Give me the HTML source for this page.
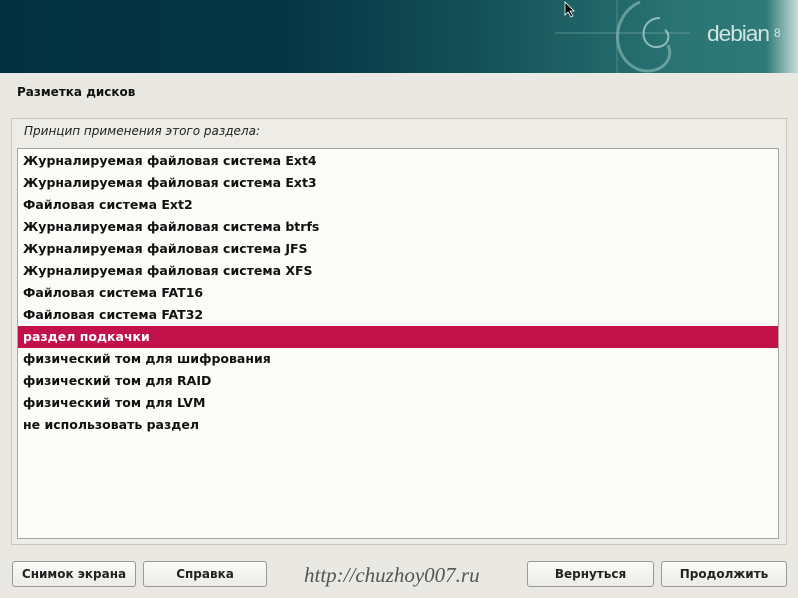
<!DOCTYPE html>
<html><head><meta charset="utf-8"><style>
body{margin:0;width:798px;height:598px;overflow:hidden;background:#e9e8e2;font-family:"DejaVu Sans","Liberation Sans",sans-serif;position:relative}
#hdr{position:absolute;left:0;top:0;width:798px;height:73px;background:linear-gradient(90deg,#033142 0%,#043443 35%,#145058 60%,#2a7473 85%,#2f7a78 96%,#c8dcd8 100%)}
.t{position:absolute;font-size:12px;font-weight:bold;color:#111}
#frame{position:absolute;left:11px;top:118px;width:774px;height:425px;border:1px solid #c8c6bf;background:#edece7}
#list{position:absolute;left:17px;top:148px;width:760px;height:388px;border:1px solid #a8a69f;background:#fbfbf8;padding-top:1px;box-sizing:content-box}
.r{height:22px;line-height:22px;padding-left:5px;font-size:12.5px;font-weight:bold;color:#111}
.sel{background:#c3114c;color:#fff}
.b{position:absolute;top:561px;height:24px;border:1px solid #9a9892;border-radius:3px;background:linear-gradient(#fafaf8,#ecebe7);font-size:12px;font-weight:bold;line-height:24px;text-align:center;color:#222}
</style></head><body>
<div id="hdr">
<svg width="798" height="73" style="position:absolute;left:0;top:0">
<line x1="555" y1="33" x2="690" y2="33" stroke="#7fb0ad" stroke-width="1" opacity=".6"/>
<line x1="617" y1="0" x2="617" y2="73" stroke="#7fb0ad" stroke-width="1" opacity=".5"/>
<path d="M640 2 C610 15 610 60 640 70 C660 75 675 60 668 45" stroke="#8fc0bc" stroke-width="3" fill="none" opacity=".6"/>
<path d="M660 18 C640 18 638 45 655 47 C668 48 672 35 665 30" stroke="#a8d0cc" stroke-width="2" fill="none" opacity=".8"/>
<text x="707" y="41" font-family="Liberation Sans Narrow,Liberation Sans,sans-serif" font-size="22" letter-spacing="-1" textLength="62" lengthAdjust="spacingAndGlyphs" fill="#cfe4e0">debian</text>
<text x="774" y="37" font-family="Liberation Sans,sans-serif" font-size="12" fill="#cfe4e0">8</text>
<path d="M565 2 L565 15 L568 12 L571 17 L573 16 L570 11 L574 11 Z" fill="#000" stroke="#fff" stroke-width=".8"/>
</svg>
</div>
<div class="t" style="left:17px;top:85px">Разметка дисков</div>
<div id="frame"></div>
<div style="position:absolute;left:24px;top:124px;font-size:12px;font-style:italic;color:#222">Принцип применения этого раздела:</div>
<div id="list">
<div class="r">Журналируемая файловая система Ext4</div>
<div class="r">Журналируемая файловая система Ext3</div>
<div class="r">Файловая система Ext2</div>
<div class="r">Журналируемая файловая система btrfs</div>
<div class="r">Журналируемая файловая система JFS</div>
<div class="r">Журналируемая файловая система XFS</div>
<div class="r">Файловая система FAT16</div>
<div class="r">Файловая система FAT32</div>
<div class="r sel">раздел подкачки</div>
<div class="r">физический том для шифрования</div>
<div class="r">физический том для RAID</div>
<div class="r">физический том для LVM</div>
<div class="r">не использовать раздел</div>
</div>
<div class="b" style="left:12px;width:122px">Снимок экрана</div>
<div class="b" style="left:143px;width:122px">Справка</div>
<div style="position:absolute;left:304px;top:563px;font-family:'Liberation Serif',serif;font-style:italic;font-size:21px;color:#555">http://chuzhoy007.ru</div>
<div class="b" style="left:527px;width:125px">Вернуться</div>
<div class="b" style="left:661px;width:124px">Продолжить</div>
</body></html>
